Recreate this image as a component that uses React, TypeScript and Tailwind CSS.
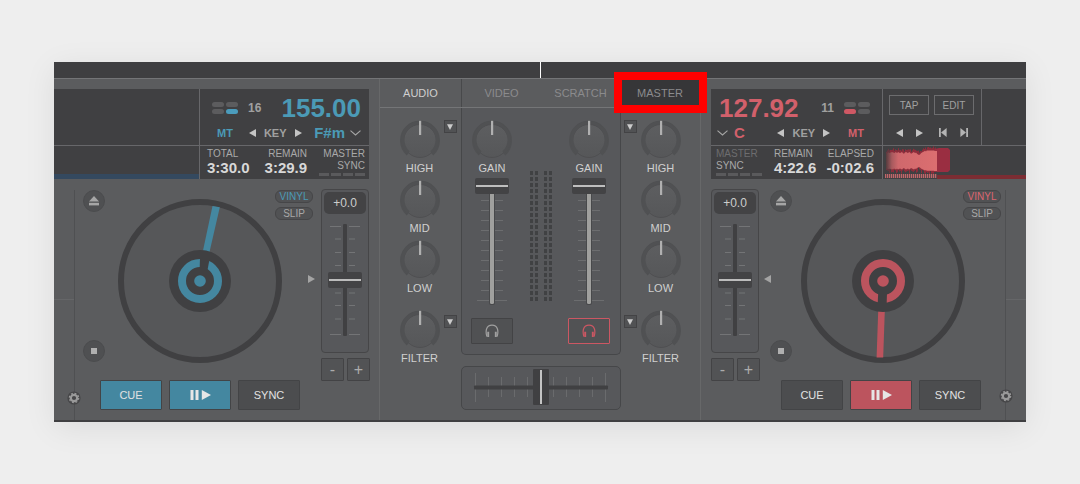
import { useId, useState } from "react";
import type { ReactNode } from "react";

type Side = "left" | "right";

const ACCENT: Record<Side, string> = { left: "#4487a0", right: "#bc545e" };

/* ---------- shared pieces ---------- */

function Range({ label, value = 50 }: { label: string; value?: number }) {
  return (
    <input
      type="range"
      aria-label={label}
      defaultValue={value}
      className="absolute inset-0 h-full w-full cursor-pointer opacity-0"
    />
  );
}

function KnobDial({ label }: { label: string }) {
  const id = useId();
  return (
    <div className="relative size-10">
      <svg viewBox="0 0 40 40" className="size-10">
        <defs>
          <linearGradient id={id} x1="0" y1="0" x2="0" y2="1">
            <stop offset="0" stopColor="#5d5e60" />
            <stop offset="1" stopColor="#565759" />
          </linearGradient>
        </defs>
        <path d="M8 34A18 18 0 1 1 32 34" fill="none" stroke="#505153" strokeWidth="4" />
        <circle cx="20" cy="21" r="16.5" fill={`url(#${id})`} stroke="#4c4d4f" strokeWidth="0.8" />
        <path d="M8.5 32.5A17.2 17.2 0 1 1 31.5 32.5" fill="none" stroke="#505153" strokeWidth="3.2" />
        <rect x="19" y="0.8" width="2.2" height="14.2" fill="#b0b0b0" />
      </svg>
      <Range label={label} />
    </div>
  );
}

function Label({ children }: { children: ReactNode }) {
  return <span className="mt-0.5 text-[11px] leading-3 text-[#d0d0d0]">{children}</span>;
}

function Triangle({ dir, className = "" }: { dir: Side; className?: string }) {
  return (
    <svg viewBox="0 0 7 8" className={`h-2 w-[7px] ${className}`}>
      <path d={dir === "right" ? "M0 0L7 4L0 8Z" : "M7 0L0 4L7 8Z"} fill="currentColor" />
    </svg>
  );
}

function ArrowButton({ dir, label }: { dir: Side; label: string }) {
  return (
    <button aria-label={label} className="text-[#c4c4c4]">
      <Triangle dir={dir} />
    </button>
  );
}

function Chevron() {
  return (
    <svg viewBox="0 0 11 6" className="h-1.5 w-[11px]" fill="none" stroke="#a6a6a6" strokeWidth="1.1">
      <path d="M0.5 0.7L5.5 5L10.5 0.7" />
    </svg>
  );
}

function LoopDots({ active, color }: { active: number; color: string }) {
  const spots = [
    [0, 0],
    [14, 0],
    [0, 7],
    [14, 7],
  ];
  return (
    <svg viewBox="0 0 26 12" className="h-3 w-[26px]">
      {spots.map(([x, y], i) => (
        <rect key={i} x={x} y={y} width="12" height="5" rx="2.5" fill={i === active ? color : "#5c5c5e"} />
      ))}
    </svg>
  );
}

function SyncDashes() {
  return (
    <div className="mt-px flex gap-0.5">
      {[0, 1, 2, 3].map((i) => (
        <span key={i} className="h-[3px] w-2.5 bg-[#5a5a5c]" />
      ))}
    </div>
  );
}

function Time({ label, value, right = false }: { label: string; value: string; right?: boolean }) {
  return (
    <div className={`flex flex-col ${right ? "items-end" : "items-start"}`}>
      <span className="text-[10px] leading-3 text-[#a9a9a9]">{label}</span>
      <span className="text-[15px] leading-4 font-bold text-[#d8d8d8]">{value}</span>
    </div>
  );
}

/* ---------- deck displays ---------- */

function LeftDisplay() {
  return (
    <div className="mr-2.5 flex bg-[#404042]">
      <div className="flex flex-1 flex-col">
        <div className="h-14" />
        <div className="flex flex-1 flex-col justify-end border-t border-[#67676a]">
          <div className="h-[5px] bg-[#34495f]" />
        </div>
      </div>
      <div className="w-[170px] border-l border-[#67676a]">
        <div className="h-14 pt-1 pr-2 pl-3">
          <div className="flex h-[30px] items-center text-[#4b9ab6]">
            <LoopDots active={3} color="#4b9cbc" />
            <span className="ml-2.5 text-xs font-bold text-[#a0a0a0]">16</span>
            <span className="ml-auto text-[26px] leading-7 font-bold">155.00</span>
          </div>
          <div className="flex h-5 items-center pl-[5px] font-bold text-[#4b9ab6]">
            <button className="text-[11px]">MT</button>
            <div className="ml-4 flex items-center gap-2">
              <ArrowButton dir="left" label="Key down" />
              <span className="text-[11px] text-[#a0a0a0]">KEY</span>
              <ArrowButton dir="right" label="Key up" />
            </div>
            <button className="ml-auto flex items-center gap-[5px] text-[15px] leading-4">
              F#m
              <Chevron />
            </button>
          </div>
        </div>
        <div className="flex h-[34px] border-t border-[#67676a] pt-0.5 pr-1 pl-[7px]">
          <Time label="TOTAL" value="3:30.0" />
          <div className="ml-[15px]">
            <Time label="REMAIN" value="3:29.9" right />
          </div>
          <div className="ml-auto flex flex-col items-end text-[10px] leading-3 text-[#a9a9a9]">
            <span>MASTER</span>
            <span>SYNC</span>
            <SyncDashes />
          </div>
        </div>
      </div>
    </div>
  );
}

const PEAKS = [
  2, 3, 4, 4, 3, 5, 4, 5, 3, 4, 5, 3, 5, 4, 3, 4, 5, 3, 2, 4, 5, 4, 3, 5, 4, 2, 3, 4, 5, 3, 4, 2, 1, 0, 1, 3, 4, 5, 6, 7, 6,
  8, 7, 8, 7, 8, 7, 8, 7, 7,
];

function Waveform() {
  const id = useId();
  const top = PEAKS.map((p, i) => `${i + 3},${9 - p * 0.6}`);
  const bottom = PEAKS.map((p, i) => `${i + 3},${21 + p * 0.5}`).reverse();
  return (
    <svg viewBox="0 0 68 33" className="h-[33px] w-[68px]">
      <defs>
        <linearGradient id={id} x1="0" x2="1">
          <stop offset="0" stopColor="#553c3e" />
          <stop offset="0.12" stopColor="#a85a5e" />
          <stop offset="0.25" stopColor="#cf686c" />
          <stop offset="1" stopColor="#db6e70" />
        </linearGradient>
      </defs>
      {PEAKS.map((p, i) => (
        <rect
          key={i}
          x={i + 3}
          y={7 - p * 0.6 - ((i * 7) % 5) * 0.45}
          width="1"
          height={16 + p * 1.1 + ((i * 5) % 4) * 0.9}
          fill="#8c2d3b"
          opacity={i < 4 ? 0.5 : 1}
        />
      ))}
      <path d="M52 3L56 2H65L67 4V24L65 26H54L52 25Z" fill="#9a2e41" />
      <polygon points={[...top, ...bottom].join(" ")} fill={`url(#${id})`} />
      <rect x="51" y="5" width="3" height="20" fill="#db6e70" />
      {Array.from({ length: 26 }, (_, i) => (
        <rect key={i} x={2 + i * 2} y="28" width="1.3" height="4" fill="#c0666a" />
      ))}
    </svg>
  );
}

function SkipIcon({ flip = false }: { flip?: boolean }) {
  return (
    <svg viewBox="0 0 8 9" className={`h-[9px] w-2 ${flip ? "-scale-x-100" : ""}`} fill="#b4b4b4">
      <rect x="0" y="0" width="1.8" height="9" />
      <path d="M7.6 0V9L2 4.5Z" />
    </svg>
  );
}

function RightDisplay() {
  return (
    <div className="ml-2.5 flex bg-[#404042]">
      <div className="w-[172px] border-r border-[#67676a]">
        <div className="h-14 pt-1 pr-3 pl-2">
          <div className="flex h-[30px] items-center text-[#d2606b]">
            <span className="text-[26px] leading-7 font-bold">127.92</span>
            <span className="mr-2.5 ml-auto text-xs font-bold text-[#a0a0a0]">11</span>
            <LoopDots active={2} color="#cf5864" />
          </div>
          <div className="flex h-5 items-center pr-1.5 font-bold text-[#d2606b]">
            <button className="-ml-0.5 flex items-center gap-1.5 text-[15px] leading-4">
              <Chevron />C
            </button>
            <div className="mr-[18px] ml-auto flex items-center gap-2">
              <ArrowButton dir="left" label="Key down" />
              <span className="text-[11px] text-[#a0a0a0]">KEY</span>
              <ArrowButton dir="right" label="Key up" />
            </div>
            <button className="text-[11px]">MT</button>
          </div>
        </div>
        <div className="flex h-[34px] border-t border-[#67676a] pt-0.5 pr-2 pl-[5px]">
          <div className="flex flex-col items-start text-[10px] leading-3 text-[#a9a9a9]">
            <span className="text-[#6d6d6f]">MASTER</span>
            <span>SYNC</span>
            <SyncDashes />
          </div>
          <div className="mr-2.5 ml-auto">
            <Time label="REMAIN" value="4:22.6" />
          </div>
          <Time label="ELAPSED" value="-0:02.6" right />
        </div>
      </div>
      <div className="flex flex-1 flex-col">
        <div className="flex h-14">
          <div className="w-[99px] border-r border-[#67676a] px-1.5 pt-1.5">
            <div className="flex gap-[5px] text-[10px] text-[#a0a0a0]">
              <button className="h-5 w-10 border border-[#6c6c6e]">TAP</button>
              <button className="h-5 w-10 border border-[#6c6c6e]">EDIT</button>
            </div>
            <div className="mt-[13px] flex justify-between px-[7px]">
              <ArrowButton dir="left" label="Beat back" />
              <ArrowButton dir="right" label="Beat forward" />
              <button aria-label="Previous" className="ml-0.5">
                <SkipIcon />
              </button>
              <button aria-label="Next">
                <SkipIcon flip />
              </button>
            </div>
          </div>
        </div>
        <div className="flex h-[34px] border-t border-[#67676a]">
          <Waveform />
          <div className="-ml-3.5 h-1 flex-1 self-end bg-[#7c2d33]" />
        </div>
      </div>
    </div>
  );
}

/* ---------- deck body ---------- */

function RoundButton({ label, children }: { label: string; children: ReactNode }) {
  return (
    <button
      aria-label={label}
      className="flex size-[22px] items-center justify-center rounded-full border border-[#4b4c4e] bg-[#4f5052]"
    >
      {children}
    </button>
  );
}

function TransportSide() {
  return (
    <div className="flex h-[172px] flex-col justify-between">
      <RoundButton label="Eject">
        <svg viewBox="0 0 10 10" className="size-2.5" fill="#a6a6a6">
          <path d="M5 0L10 5.5H0Z" />
          <rect y="6.8" width="10" height="2.6" />
        </svg>
      </RoundButton>
      <RoundButton label="Stop">
        <span className="size-1.5 bg-[#b0b0b0]" />
      </RoundButton>
    </div>
  );
}

function Vinyl({ side }: { side: Side }) {
  const c = ACCENT[side];
  return (
    <svg viewBox="0 0 164 164" className="mt-[9px] size-[164px] shrink-0">
      <circle cx="82" cy="82" r="79" fill="#565759" stroke="#404042" strokeWidth="6" />
      {side === "left" ? (
        <path d="M94.5 7L101.8 8.2L91.5 53L85 51.6Z" fill={c} />
      ) : (
        <path d="M77.2 112H83.8L82.2 158.5H75.6Z" fill={c} />
      )}
      <circle cx="82" cy="82" r="31" fill="#404042" />
      <circle cx="82" cy="82" r="18" fill="none" stroke={c} strokeWidth="8" />
      {side === "left" ? (
        <path d="M82 59H91.8L89.5 71H81.6Z" fill="#404042" />
      ) : (
        <path d="M77.2 94H86L85.6 106H76.6Z" fill="#404042" />
      )}
      <circle cx="82" cy="82" r="5.8" fill={c} />
    </svg>
  );
}

function Pills({ side }: { side: Side }) {
  const pill =
    "h-[13px] w-[38px] rounded-md border border-[#464648] bg-[#515254] text-center text-[10px] leading-[11px]";
  return (
    <div className="z-10 flex flex-col gap-1">
      <button className={`${pill} ${side === "left" ? "text-[#4b9ab6]" : "text-[#dd6570]"}`}>VINYL</button>
      <button className={`${pill} text-[#a8a8a8]`}>SLIP</button>
    </div>
  );
}

function PitchFader() {
  const ticks = [12.5, 25, 38.5, 51.5, 79, 91.5, 105, 120.5];
  return (
    <div className="w-[49px] shrink-0">
      <div className="h-[164px] w-12 rounded border border-[#464648] bg-[#57585b] p-0.5">
        <output className="flex h-[22px] items-center justify-center rounded-[5px] bg-[#434345] text-xs text-[#cdcdcd]">
          +0.0
        </output>
        <div className="relative">
          <svg viewBox="0 0 42 132" className="h-[132px] w-[42px]">
            {ticks.map((y, i) => {
              const inset = i === 0 || i === ticks.length - 1 ? 6 : 11;
              return (
                <path key={y} d={`M${inset} ${y}H17M25 ${y}H${42 - inset}`} stroke="#737476" strokeWidth="1" />
              );
            })}
            <rect x="19" y="10" width="4" height="112" rx="1" fill="#404042" />
            <rect x="4" y="58" width="34" height="16" rx="2" fill="#434345" />
            <rect x="5" y="65" width="32" height="2" fill="#bcbcbc" />
          </svg>
          <Range label="Pitch" />
        </div>
      </div>
      <div className="mt-[5px] flex gap-[3px] text-base leading-5 text-[#acacac]">
        <button className="size-[23px] rounded-[1px] border border-[#434345] bg-[#525355]">-</button>
        <button className="size-[23px] rounded-[1px] border border-[#434345] bg-[#525355]">+</button>
      </div>
    </div>
  );
}

function DeckButton({ children, fill, label }: { children: ReactNode; fill?: Side; label?: string }) {
  const tone =
    fill === "left" ? "bg-[#4487a0]" : fill === "right" ? "bg-[#bc545e]" : "bg-[#4c4d4f]";
  return (
    <button
      aria-label={label}
      className={`flex h-[30px] w-[62px] items-center justify-center rounded-[1px] border border-[#434446] text-[11px] text-[#e2e2e2] ${tone}`}
    >
      {children}
    </button>
  );
}

function DeckButtons({ side }: { side: Side }) {
  return (
    <div className={`mt-[17px] flex gap-[7px] ${side === "left" ? "pl-[25px]" : "pl-[21px]"}`}>
      <DeckButton fill={side === "left" ? "left" : undefined}>CUE</DeckButton>
      <DeckButton fill={side} label="Play or pause">
        <svg viewBox="0 0 21 10" className="h-2.5 w-[21px]" fill="#e6e6e6">
          <rect x="0.5" width="3" height="10" />
          <rect x="5.5" width="3" height="10" />
          <path d="M11.8 0L21 5L11.8 10Z" />
        </svg>
      </DeckButton>
      <DeckButton>SYNC</DeckButton>
    </div>
  );
}

function EdgeStrip({ side }: { side: Side }) {
  return (
    <div className={`relative mt-px min-w-5 flex-1 border-[#4f5052] ${side === "left" ? "border-r" : "border-l"}`}>
      <div className="h-[110px] border-b border-[#656668]" />
      <button
        aria-label="Deck settings"
        className={`absolute size-[14px] ${side === "left" ? "-right-[7px] bottom-[15px]" : "bottom-[17px] -left-[7px]"}`}
      >
        <svg viewBox="0 0 14 14" className="size-[14px]">
          <circle cx="7" cy="7" r="6.6" fill="#464648" />
          <circle cx="7" cy="7" r="4.7" fill="none" stroke="#9a9a9a" strokeWidth="1.2" strokeDasharray="1.9 1.79" />
          <circle cx="7" cy="7" r="3.2" fill="none" stroke="#9a9a9a" strokeWidth="2.2" />
        </svg>
      </button>
    </div>
  );
}

function LeftDeck() {
  return (
    <section aria-label="Left deck" className="flex flex-1 flex-col pt-2.5">
      <LeftDisplay />
      <div className="flex flex-1 pt-2.5">
        <EdgeStrip side="left" />
        <div className="pt-px pb-2.5">
          <div className="flex pl-2">
            <TransportSide />
            <div className="ml-[13px]">
              <Vinyl side="left" />
            </div>
            <div className="-ml-[7px]">
              <Pills side="left" />
            </div>
            <Triangle dir="right" className="mt-[85px] mr-1.5 -ml-[5px] text-[#a4a4a4]" />
          </div>
          <DeckButtons side="left" />
        </div>
        <div className="mr-[9px]">
          <PitchFader />
        </div>
      </div>
    </section>
  );
}

function RightDeck() {
  return (
    <section aria-label="Right deck" className="flex flex-1 flex-col pt-2.5">
      <RightDisplay />
      <div className="flex flex-1 pt-2.5">
        <div className="ml-2.5">
          <PitchFader />
        </div>
        <div className="pt-px pb-2.5">
          <div className="flex pr-1">
            <Triangle dir="left" className="mt-[85px] -mr-px ml-1 text-[#a4a4a4]" />
            <TransportSide />
            <div className="ml-[9px]">
              <Vinyl side="right" />
            </div>
            <div className="-ml-0.5">
              <Pills side="right" />
            </div>
          </div>
          <DeckButtons side="right" />
        </div>
        <EdgeStrip side="right" />
      </div>
    </section>
  );
}

/* ---------- mixer ---------- */

function EqKnob({ label, menu, side }: { label: string; menu?: boolean; side: Side }) {
  return (
    <div className="grid grid-cols-[1fr_40px_1fr]">
      <div className="col-start-2 row-start-1 flex flex-col items-center">
        <KnobDial label={label} />
        <Label>{label}</Label>
      </div>
      {menu && (
        <button
          aria-label={`${label} options`}
          className={`row-start-1 flex h-[13px] w-[13px] items-center justify-center border border-[#434345] bg-[#515254] ${
            side === "left" ? "col-start-3 ml-1" : "col-start-1 mr-1 justify-self-end"
          } ${label === "FILTER" ? "mt-[5px]" : ""}`}
        >
          <svg viewBox="0 0 6 6" className="size-1.5" fill="#cccccc">
            <path d="M0 0.3H6L3 6Z" />
          </svg>
        </button>
      )}
    </div>
  );
}

function EqColumn({ side }: { side: Side }) {
  return (
    <div className={`flex flex-col gap-1.5 pt-3 ${side === "left" ? "pr-0.5" : ""}`}>
      <EqKnob side={side} label="HIGH" menu />
      <EqKnob side={side} label="MID" />
      <EqKnob side={side} label="LOW" />
      <div className="mt-2.5">
        <EqKnob side={side} label="FILTER" menu />
      </div>
    </div>
  );
}

function Channel({ cue }: { cue: boolean }) {
  return (
    <div className="flex w-[42px] flex-col items-center">
      <KnobDial label="Gain" />
      <Label>GAIN</Label>
      <div className="relative mt-0.5">
        <svg viewBox="0 0 42 132" className="h-[132px] w-[42px]">
          {Array.from({ length: 11 }, (_, i) => {
            const y = 24.5 + i * 10;
            const inset = i === 10 ? 6 : 10;
            return <path key={i} d={`M${inset} ${y}H18M24 ${y}H${42 - inset}`} stroke="#6c6d6f" />;
          })}
          <rect x="18" y="16" width="6" height="113" rx="2" fill="#48494b" />
          <rect x="19" y="16" width="4" height="112" rx="1.5" fill="#a0a09e" />
          <rect x="4" y="2" width="34" height="16" rx="2" fill="#434345" />
          <rect x="5" y="9" width="32" height="2" fill="#bebebe" />
        </svg>
        <Range label="Volume" value={100} />
      </div>
      <button
        aria-label="Headphones"
        className={`mt-2.5 flex h-[26px] w-[42px] items-center justify-center rounded-[1px] border ${
          cue ? "border-[#cc5763] bg-[#515254] text-[#cc5763]" : "border-[#434345] bg-[#505153] text-[#a0a0a0]"
        }`}
      >
        <svg viewBox="0 0 14 14" className="size-3.5" fill="none" stroke="currentColor">
          <path d="M1.9 12.6C0.2 7 1.2 1.2 7 1.2S13.8 7 12.1 12.6" strokeWidth="1.2" />
          <path d="M3.2 7.8V13M10.8 7.8V13" strokeWidth="1.9" />
        </svg>
      </button>
    </div>
  );
}

function Meters() {
  return (
    <svg viewBox="0 0 22 132" className="mt-[51px] h-[132px] w-[22px]" fill="#404143">
      {Array.from({ length: 22 }, (_, r) =>
        [0, 5, 14, 19].map((x) => <rect key={`${r}-${x}`} x={x} y={r * 6} width="3" height="4" />),
      )}
    </svg>
  );
}

function Crossfader() {
  const ticks = [13.5, 26.5, 39.5, 52.5, 65.5, 91.5, 104.5, 117.5, 130.5, 143.5];
  return (
    <div className="relative mt-[11px] rounded-[5px] border border-[#464749] bg-[#57585b]">
      <svg viewBox="0 0 158 42" className="h-[42px] w-[158px]">
        {ticks.map((x, i) => (
          <path key={x} d={i % 9 === 0 ? `M${x} 6V35` : `M${x} 10V30`} stroke="#6a6b6d" />
        ))}
        <rect x="12" y="18.5" width="134" height="4" rx="1" fill="#404042" />
        <rect x="71" y="2" width="16" height="36" rx="1" fill="#404042" />
        <rect x="78" y="3" width="2" height="34" fill="#c4c4c4" />
      </svg>
      <Range label="Crossfader" />
    </div>
  );
}

const TABS = ["AUDIO", "VIDEO", "SCRATCH", "MASTER"];

function Mixer() {
  const [active, setActive] = useState("AUDIO");
  return (
    <section aria-label="Mixer" className="w-[322px] shrink-0 border-x border-[#676869]">
      <div role="tablist" className="grid h-[29px] grid-cols-[82px_79px_79px_80px] border-b border-[#747577]">
        {TABS.map((tab) => (
          <button
            key={tab}
            role="tab"
            aria-selected={tab === active}
            onClick={() => setActive(tab)}
            className={`relative text-[11px] ${
              tab === active ? "border-r border-[#48494b] text-[#cfcfcf]" : "text-[#8b8b8d]"
            } ${tab === "MASTER" ? "bg-[#363638]" : ""}`}
          >
            {tab}
            {tab === "MASTER" && (
              <span className="absolute -top-[7px] -right-[7px] -bottom-1.5 -left-1.5 border-8 border-[#ff0000]" />
            )}
          </button>
        ))}
      </div>
      <div className="grid grid-cols-[81px_160px_79px]">
        <EqColumn side="left" />
        <div>
          <div className="flex justify-between rounded-b-[5px] border-x border-b border-[#464749] bg-[#57585b] pt-3 pr-2.5 pb-2.5 pl-[9px]">
            <Channel cue={false} />
            <Meters />
            <Channel cue />
          </div>
          <Crossfader />
        </div>
        <EqColumn side="right" />
      </div>
    </section>
  );
}

export default function App() {
  return (
    <div className="min-h-screen bg-[#eeeeee] px-[54px] py-[62px] font-['Liberation_Sans',Arial,sans-serif]">
      <main className="bg-[#5b5c5e] shadow-[0_6px_30px_rgba(0,0,0,0.08)]">
        <div className="flex h-[17px] justify-center border-b border-[#747577] bg-[#3f3f41]">
          <div className="w-px bg-white" />
        </div>
        <div className="flex border-b-2 border-[#3f3f41]">
          <LeftDeck />
          <Mixer />
          <RightDeck />
        </div>
      </main>
    </div>
  );
}
